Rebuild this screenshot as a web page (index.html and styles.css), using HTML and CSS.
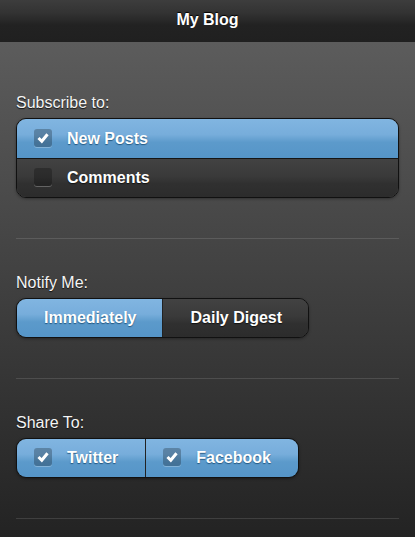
FILE: index.html
```html
<!DOCTYPE html>
<html lang="en">
<head>
<meta charset="utf-8">
<title>My Blog</title>
<link rel="stylesheet" href="styles.css">
</head>
<body>
<header class="header"><h1 class="title">My Blog</h1></header>
<main class="content">
  <section class="field">
    <div class="label">Subscribe to:</div>
    <div class="group group-v">
      <div class="btn btn-on check-btn">
        <span class="box"><svg viewBox="0 0 18 18" width="18" height="18"><path d="M4.5 9 L7.8 12.3 L13.5 5.3" fill="none" stroke="#fff" stroke-width="3"/></svg></span>
        New Posts
      </div>
      <div class="btn btn-off check-btn">
        <span class="box"></span>
        Comments
      </div>
    </div>
  </section>
  <section class="field">
    <div class="label">Notify Me:</div>
    <div class="group group-h">
      <div class="btn btn-on seg">Immediately</div>
      <div class="btn btn-off seg">Daily Digest</div>
    </div>
  </section>
  <section class="field">
    <div class="label">Share To:</div>
    <div class="group group-h">
      <div class="btn btn-on check-btn share">
        <span class="box"><svg viewBox="0 0 18 18" width="18" height="18"><path d="M4.5 9 L7.8 12.3 L13.5 5.3" fill="none" stroke="#fff" stroke-width="3"/></svg></span>
        Twitter
      </div>
      <div class="btn btn-on check-btn share">
        <span class="box"><svg viewBox="0 0 18 18" width="18" height="18"><path d="M4.5 9 L7.8 12.3 L13.5 5.3" fill="none" stroke="#fff" stroke-width="3"/></svg></span>
        Facebook
      </div>
    </div>
  </section>
</main>
</body>
</html>
```

FILE: styles.css
```css
html { height: 100%; }
body {
  margin: 0;
  min-height: 100%;
  font-family: "Liberation Sans", Arial, sans-serif;
  background: linear-gradient(#5f5f5f 0px, #5c5c5c 42px, #232323 100%);
  color: #fff;
}
.header {
  height: 42px;
  background: linear-gradient(#3d3d3d, #333 30%, #222 60%, #202020);
  display: flex;
  align-items: center;
  justify-content: center;
}
.title {
  margin: 0;
  font-size: 16px;
  font-weight: bold;
  color: #fff;
  line-height: 20px;
  text-shadow: 0 -1px 1px #000;
  padding-bottom: 2px;
}
.content {
  padding: 17px 16px 0;
}
.field {
  padding: 33px 0 40px;
  border-bottom: 1px solid rgba(255,255,255,0.12);
}
.label {
  font-size: 16px;
  line-height: 20px;
  padding-top: 1px;
  margin-bottom: 5px;
  color: #f4f4f4;
  text-shadow: 0 1px 1px #111;
}
.group {
  border: 1px solid #111;
  border-radius: 10px;
  overflow: hidden;
  box-shadow: 0 1px 3px rgba(0,0,0,0.35);
}
.group-v {
  display: flex;
  flex-direction: column;
}
.group-h {
  display: inline-flex;
  vertical-align: top;
}
.btn {
  box-sizing: border-box;
  display: flex;
  align-items: center;
  font-size: 16px;
  font-weight: bold;
  color: #fff;
}
.btn-on {
  background: linear-gradient(#81b5e1, #77addb 40%, #5c9acb 60%, #5595c8);
  text-shadow: 0 1px 1px rgba(20,70,110,0.8);
}
.btn-off {
  background: linear-gradient(#424242, #3a3a3a 45%, #303030 65%, #2c2c2c);
  text-shadow: 0 1px 1px #111;
}
.group-v .btn {
  height: 39px;
  padding-left: 50px;
}
.group-v .btn + .btn {
  border-top: 1px solid #151515;
}
.check-btn { position: relative; }
.box {
  position: absolute;
  left: 17px;
  top: 50%;
  margin-top: -10px;
  width: 18px;
  height: 18px;
  border-radius: 3px;
  background: rgba(0,0,0,0.25);
  box-shadow: 0 1px 0 rgba(255,255,255,0.25);
}
.box svg { display: block; }
.seg {
  height: 38px;
  padding: 0 26px 0 27px;
  justify-content: center;
}
.share {
  height: 38px;
  padding: 0 27px 0 50px;
}
.group-h .btn + .btn {
  border-left: 1px solid #222;
}
```
